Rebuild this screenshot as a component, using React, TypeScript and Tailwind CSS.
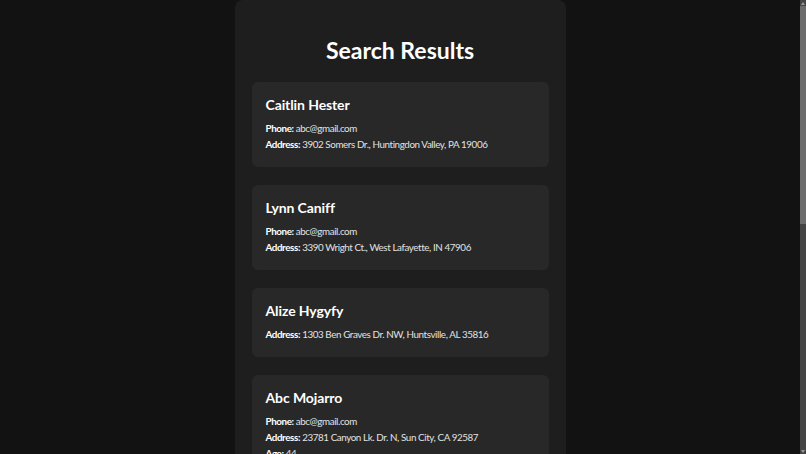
import React from 'react';

type Person = {
  name: string;
  phone?: string;
  address?: string;
  age?: number;
};

const results: Person[] = [
  { name: 'Caitlin Hester', phone: 'abc@gmail.com', address: '3902 Somers Dr., Huntingdon Valley, PA 19006' },
  { name: 'Lynn Caniff', phone: 'abc@gmail.com', address: '3390 Wright Ct., West Lafayette, IN 47906' },
  { name: 'Alize Hygyfy', address: '1303 Ben Graves Dr. NW, Huntsville, AL 35816' },
  { name: 'Abc Mojarro', phone: 'abc@gmail.com', address: '23781 Canyon Lk. Dr. N, Sun City, CA 92587', age: 44 },
  { name: 'Dana Whitcomb', phone: 'abc@gmail.com', address: '118 Maple Ave., Ithaca, NY 14850' },
  { name: 'Marcus Oyelaran', address: '4410 Ridge Rd., Austin, TX 78731', age: 37 },
  { name: 'Priya Nandakumar', phone: 'abc@gmail.com', address: '77 Harbor St., Portland, ME 04101' },
];

const Field = ({ label, value }: { label: string; value: string | number }) => (
  <p className="whitespace-nowrap text-[9.8px] leading-4 tracking-[-0.4px] text-[#e2e2e2]">
    <span className="font-bold text-white">{label}:</span> {value}
  </p>
);

const ResultCard = ({ person }: { person: Person }) => (
  <div className="rounded-md bg-[#282828] px-[14px] pt-[12.5px] pb-[15px]">
    <h3 className="mb-[5.5px] text-[14px] font-bold leading-5 tracking-[-0.1px] text-white">{person.name}</h3>
    {person.phone && <Field label="Phone" value={person.phone} />}
    {person.address && <Field label="Address" value={person.address} />}
    {person.age !== undefined && <Field label="Age" value={person.age} />}
  </div>
);

// fake classic scrollbar, the headless browser only draws overlay ones
const Scrollbar = () => (
  <div className="flex w-[6px] shrink-0 flex-col bg-[#444444]">
    <div className="flex h-[6px] items-center justify-center">
      <svg width="4" height="3" viewBox="0 0 4 3"><path d="M2 0L4 3H0z" fill="#9a9a9a" /></svg>
    </div>
    <div className="h-[218px] bg-[#6c6c6c]" />
    <div className="flex-1" />
    <div className="flex h-[6px] items-center justify-center">
      <svg width="4" height="3" viewBox="0 0 4 3"><path d="M0 0H4L2 3z" fill="#9a9a9a" /></svg>
    </div>
  </div>
);

export default function App() {
  return (
    <div
      className="flex h-[454px] overflow-hidden bg-[#121212]"
      style={{ fontFamily: 'Lato, "Noto Sans", sans-serif' }}
    >
      <main className="min-w-0 flex-1 overflow-hidden">
        <div className="mx-auto w-[331px] rounded-lg bg-[#1e1e1e] px-[17px] pt-[36px] pb-6">
          <h1 className="mb-[18px] text-center text-[23px] font-bold leading-7 text-white">Search Results</h1>
          <div className="flex flex-col gap-[18px]">
            {results.map((p) => (
              <ResultCard key={p.name} person={p} />
            ))}
          </div>
        </div>
      </main>
      <Scrollbar />
    </div>
  );
}
